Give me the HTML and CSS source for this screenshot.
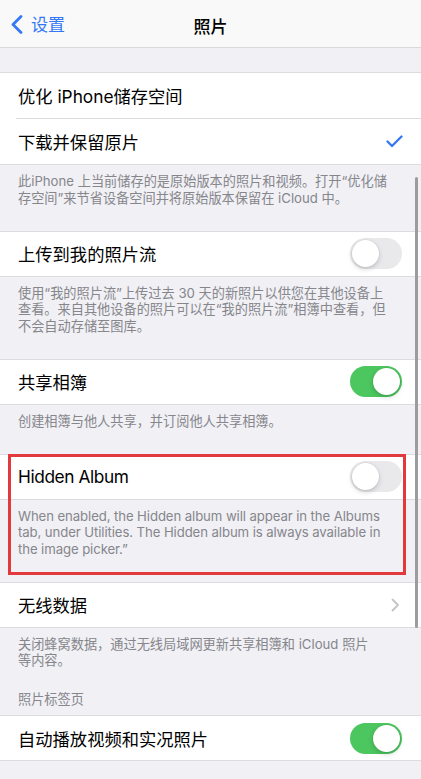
FILE: index.html
```html
<!DOCTYPE html>
<html lang="zh-CN">
<head>
<meta charset="utf-8">
<title>照片</title>
<link rel="stylesheet" href="styles.css">
</head>
<body>
<div class="screen">
  <header class="nav">
    <div class="back">
      <svg class="back-icon" width="13" height="19" viewBox="0 0 13 19"><path d="M11 1.5 L3 9.5 L11 17.5" fill="none" stroke="#3478f6" stroke-width="2.8" stroke-linecap="round" stroke-linejoin="round"/></svg>
      <span>设置</span>
    </div>
    <div class="title">照片</div>
  </header>

  <div class="band"></div>

  <section class="group">
    <div class="row tall"><span class="label">优化 iPhone储存空间</span></div>
    <div class="row tall sep">
      <span class="label">下载并保留原片</span>
      <svg class="check" width="17" height="13" viewBox="0 0 17 13"><path d="M1.5 6.5 L6 11 L15.5 1.5" fill="none" stroke="#3478f6" stroke-width="2.3" stroke-linecap="round" stroke-linejoin="round"/></svg>
    </div>
  </section>
  <p class="note">此iPhone 上当前储存的是原始版本的照片和视频。打开“优化储<br>存空间”来节省设备空间并将原始版本保留在 iCloud 中。</p>

  <section class="group">
    <div class="row"><span class="label">上传到我的照片流</span><span class="switch"></span></div>
  </section>
  <p class="note">使用“我的照片流”上传过去 30 天的新照片以供您在其他设备上<br>查看。来自其他设备的照片可以在“我的照片流”相簿中查看，但<br>不会自动存储至图库。</p>

  <section class="group">
    <div class="row"><span class="label">共享相簿</span><span class="switch on"></span></div>
  </section>
  <p class="note">创建相簿与他人共享，并订阅他人共享相簿。</p>

  <div class="marked">
    <section class="group">
      <div class="row"><span class="label en">Hidden Album</span><span class="switch"></span></div>
    </section>
    <p class="note en">When enabled, the Hidden album will appear in the Albums<br>tab, under Utilities. The Hidden album is always available in<br>the image picker.”</p>
    <div class="highlight"></div>
  </div>

  <section class="group">
    <div class="row">
      <span class="label">无线数据</span>
      <svg class="chevron" width="9" height="14" viewBox="0 0 9 14"><path d="M1.5 1.5 L7 7 L1.5 12.5" fill="none" stroke="#c4c4c8" stroke-width="1.8" stroke-linecap="round" stroke-linejoin="round"/></svg>
    </div>
  </section>
  <p class="note flush">关闭蜂窝数据，通过无线局域网更新共享相簿和 iCloud 照片<br>等内容。</p>

  <h2 class="section-head">照片标签页</h2>
  <section class="group">
    <div class="row"><span class="label">自动播放视频和实况照片</span><span class="switch on"></span></div>
  </section>

  <div class="scroll-indicator"></div>
</div>
</body>
</html>
```

FILE: styles.css
```css
* {
  box-sizing: border-box;
}

html, body {
  margin: 0;
  padding: 0;
  background: #f0f0f5;
}

body {
  font-family: "Inter", "Noto Sans CJK SC", sans-serif;
  color: #000;
}

.screen {
  position: relative;
  width: 421px;
  min-height: 779px;
  overflow: hidden;
}

/* navigation bar */
.nav {
  height: 48px;
  background: #f9f9f9;
  border-bottom: 1px solid #d9d9dc;
  display: flex;
  align-items: center;
  justify-content: center;
  position: relative;
}

.back {
  position: absolute;
  left: 10px;
  top: 0;
  height: 47px;
  display: flex;
  align-items: center;
  gap: 8px;
  color: #3478f6;
  font-size: 17px;
}

.back-icon {
  margin-top: 1px;
}

.title {
  font-size: 17px;
  font-weight: 500;
  margin-top: 4px;
}

.band {
  height: 24px;
}

/* grouped rows */
.group {
  background: #fff;
  border-top: 1px solid #dcdce0;
  border-bottom: 1px solid #dcdce0;
}

.row {
  height: 44px;
  display: flex;
  align-items: center;
  justify-content: space-between;
  padding: 0 19px 0 18px;
  font-size: 17.3px;
  position: relative;
}

.row.tall {
  height: 45px;
}

.row.sep {
  height: 46px;
  border-top: 1px solid #dcdce0;
  margin-left: 16px;
  padding-left: 2px;
}

.label.en {
  letter-spacing: -0.4px;
}

.check {
  margin-right: -1px;
}

.chevron {
  margin-right: 2px;
}

/* switches */
.switch {
  width: 52px;
  height: 31px;
  border-radius: 16px;
  background: #e9e9eb;
  position: relative;
  flex: none;
}

.switch::after {
  content: "";
  position: absolute;
  top: 2px;
  left: 2px;
  width: 27px;
  height: 27px;
  border-radius: 50%;
  background: #fff;
  box-shadow: 0 0 0 0.5px rgba(0, 0, 0, 0.06), 0 2px 5px rgba(0, 0, 0, 0.18);
}

.switch.on {
  background: #4cc65f;
}

.switch.on::after {
  left: 23px;
}

/* footers and headers */
.note {
  margin: 0;
  padding: 8px 10px 24.5px 18px;
  font-size: 13.2px;
  line-height: 16.5px;
  color: #86868b;
}

.note.en {
  font-size: 13.2px;
  letter-spacing: -0.1px;
}

.note.flush {
  padding-bottom: 0;
}

.section-head {
  margin: 0;
  padding: 22px 18px 8px;
  font-size: 13.2px;
  line-height: 16.5px;
  font-weight: 400;
  color: #86868b;
}

/* annotated block */
.marked {
  position: relative;
}

.highlight {
  position: absolute;
  left: 8px;
  top: 0;
  width: 398px;
  height: 121px;
  border: 3px solid #e2393d;
  pointer-events: none;
}

.scroll-indicator {
  position: absolute;
  left: 415px;
  top: 177px;
  width: 3px;
  height: 451px;
  border-radius: 2px;
  background: #9c9ca0;
}
```
